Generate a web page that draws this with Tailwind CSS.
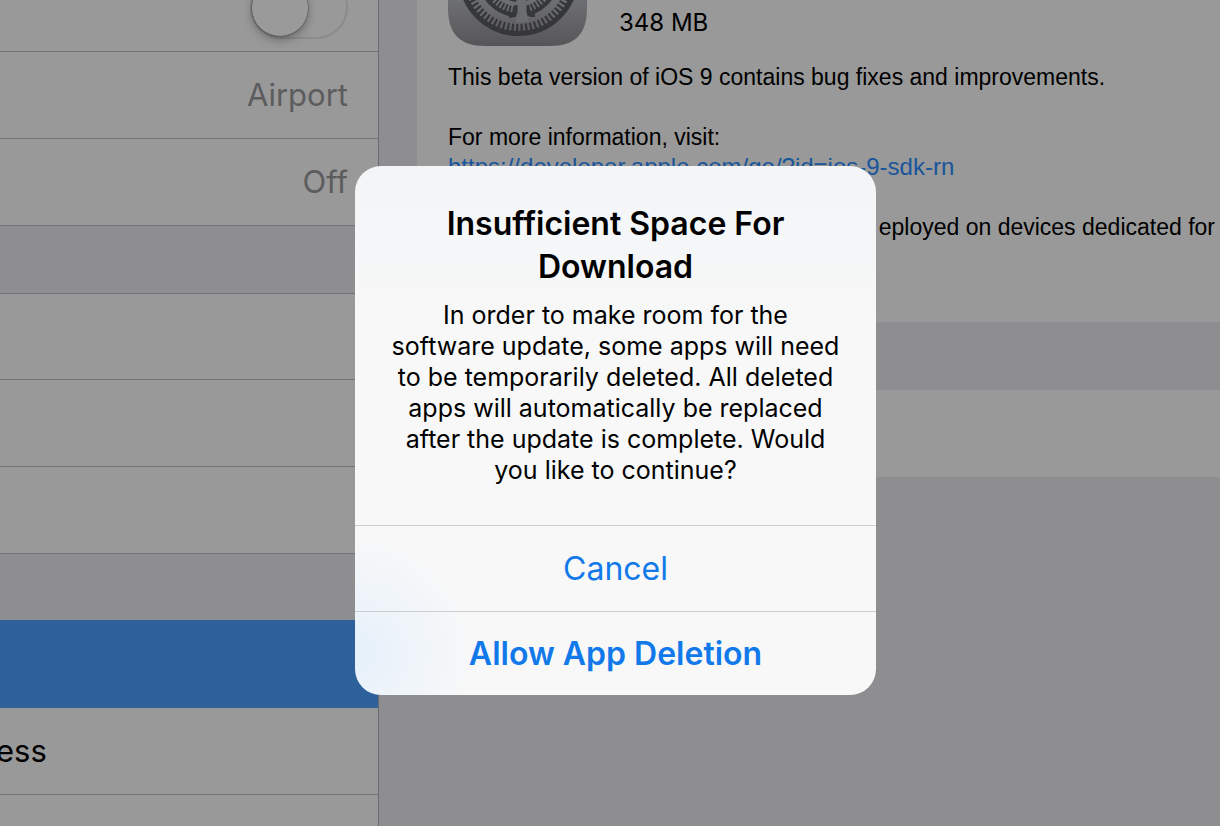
<!DOCTYPE html>
<html lang="en">
<head>
<meta charset="utf-8">
<meta name="viewport" content="width=device-width, initial-scale=1">
<title>Software Update</title>
<script src="https://cdn.jsdelivr.net/npm/@tailwindcss/browser@4"></script>
</head>
<body class="h-screen overflow-hidden bg-[#8e8e90] font-['Inter',sans-serif] text-black">
<div class="relative flex h-full overflow-hidden">
  <aside class="w-[379px] shrink-0 border-r border-[#6a6a6c] text-[31px] leading-10 text-[#5c5c5e]">
    <ul class="bg-[#999999]">
      <li class="flex h-[52px] items-start justify-end border-b border-[#747476] pr-[30px]">
        <label class="relative -mt-6 block h-[63px] w-[98px]">
          <input type="checkbox" role="switch" aria-label="Toggle setting" class="block h-full w-full appearance-none rounded-full border-2 border-[#8b8b8b] bg-[#999999]">
          <span class="absolute top-1 left-[2px] size-14 rounded-full bg-[#9a9a9a] shadow-[0_0_1px_1px_rgba(0,0,0,0.2),0_4px_10px_rgba(0,0,0,0.3)]"></span>
        </label>
      </li>
      <li class="flex h-[87px] items-center justify-end border-b border-[#747476] pr-[30px]">Airport</li>
      <li class="flex h-[87px] items-center justify-end border-b border-[#747476] pr-[30px]">Off</li>
    </ul>
    <ul class="mt-[67px] border-t border-[#747476] bg-[#999999]">
      <li class="h-[86px] border-b border-[#747476]"></li>
      <li class="h-[87px] border-b border-[#747476]"></li>
      <li class="h-[87px] border-b border-[#747476]"></li>
    </ul>
    <ul class="mt-[66px] bg-[#999999] text-black">
      <li class="h-[88px] bg-[#2e6199]"></li>
      <li class="-ml-1 flex h-[87px] items-center border-b border-[#747476]">ess</li>
      <li class="h-20"></li>
    </ul>
  </aside>
  <main class="min-w-0 grow overflow-hidden pl-[38px] font-['Liberation_Sans',sans-serif] text-[23px] leading-[30px]">
    <section class="h-[322px] bg-[#999999] pl-[31px] whitespace-nowrap">
      <div class="flex h-[46px] items-end gap-8">
        <svg class="h-[46px] w-[139px] shrink-0" viewBox="0 0 139 46" aria-hidden="true">
          <defs>
            <linearGradient id="tile" x1="0" y1="0.600" x2="0" y2="1"><stop offset="0" stop-color="#737477"/><stop offset="1" stop-color="#565659"/></linearGradient>
          </defs>
          <path d="M0-93H139V8C139 34 127 46 102 46H37C12 46 0 34 0 8Z" fill="url(#tile)"/>
          <g fill="none" stroke="#36373a">
            <circle cx="70.500" cy="-24" r="57.500" stroke-width="5"/>
            <circle cx="70.500" cy="-24" r="52" stroke-width="8" stroke-dasharray="2.300 2.238"/>
            <circle cx="70.500" cy="-24" r="39" stroke-width="4"/>
            <circle cx="70.500" cy="-24" r="34" stroke-width="7" stroke-dasharray="2 1.814"/>
            <circle cx="70.500" cy="-24" r="24" stroke-width="4"/>
            <circle cx="70.500" cy="-24" r="21" stroke-width="6" stroke-dasharray="2 1.770"/>
          </g>
          <path d="M69-24L68 22H80L76-24Z" fill="#6c6d70"/>
          <path d="M68 5V12Q67 17 61 16M80 5V12Q81 17 87 15" fill="none" stroke="#36373a" stroke-width="3"/>
        </svg>
        <p class="mb-2 font-['Inter',sans-serif] text-2xl leading-[30px]">348 MB</p>
      </div>
      <p class="mt-4">This beta version of iOS 9 contains bug fixes and improvements.</p>
      <p class="mt-[30px]">For more information, visit:</p>
      <p class="text-2xl leading-[30px]"><a href="https://developer.apple.com/go/?id=ios-9-sdk-rn" class="text-[#1a559c]">https://developer.apple.com/go/?id=ios-9-sdk-rn</a></p>
      <p class="mt-[30px] flex w-[767px] justify-end">eployed on devices dedicated for</p>
    </section>
    <section class="mt-[68px] h-[87px] bg-[#999999]"></section>
  </main>
  <div class="pointer-events-none absolute inset-0 flex items-start justify-center pt-[166px] pl-[11px]">
    <div role="alertdialog" aria-labelledby="alert-title" aria-describedby="alert-text" class="pointer-events-auto w-[521px] overflow-hidden rounded-[26px] bg-[#f8f8f8] bg-[radial-gradient(circle_at_0%_92%,#e6f1fb_0,#f8f8f800_120px),linear-gradient(to_bottom,#f3f5f7_0,#f8f8f800_180px)] text-center">
      <div class="px-8 pt-9 pb-[39px]">
        <h1 id="alert-title" class="text-[32px] leading-[43px] font-semibold">Insufficient Space For<br>Download</h1>
        <p id="alert-text" class="mt-3 text-[25px] leading-[31px]">In order to make room for the<br>software update, some apps will need<br>to be temporarily deleted. All deleted<br>apps will automatically be replaced<br>after the update is complete. Would<br>you like to continue?</p>
      </div>
      <button type="button" class="block h-[86px] w-full border-t border-[#cbcdcf] text-[32px] text-[#1279ea]">Cancel</button>
      <button type="button" class="block h-[84px] w-full border-t border-[#cbcdcf] text-[32px] font-semibold text-[#1279ea]">Allow App Deletion</button>
    </div>
  </div>
</div>
</body>
</html>
